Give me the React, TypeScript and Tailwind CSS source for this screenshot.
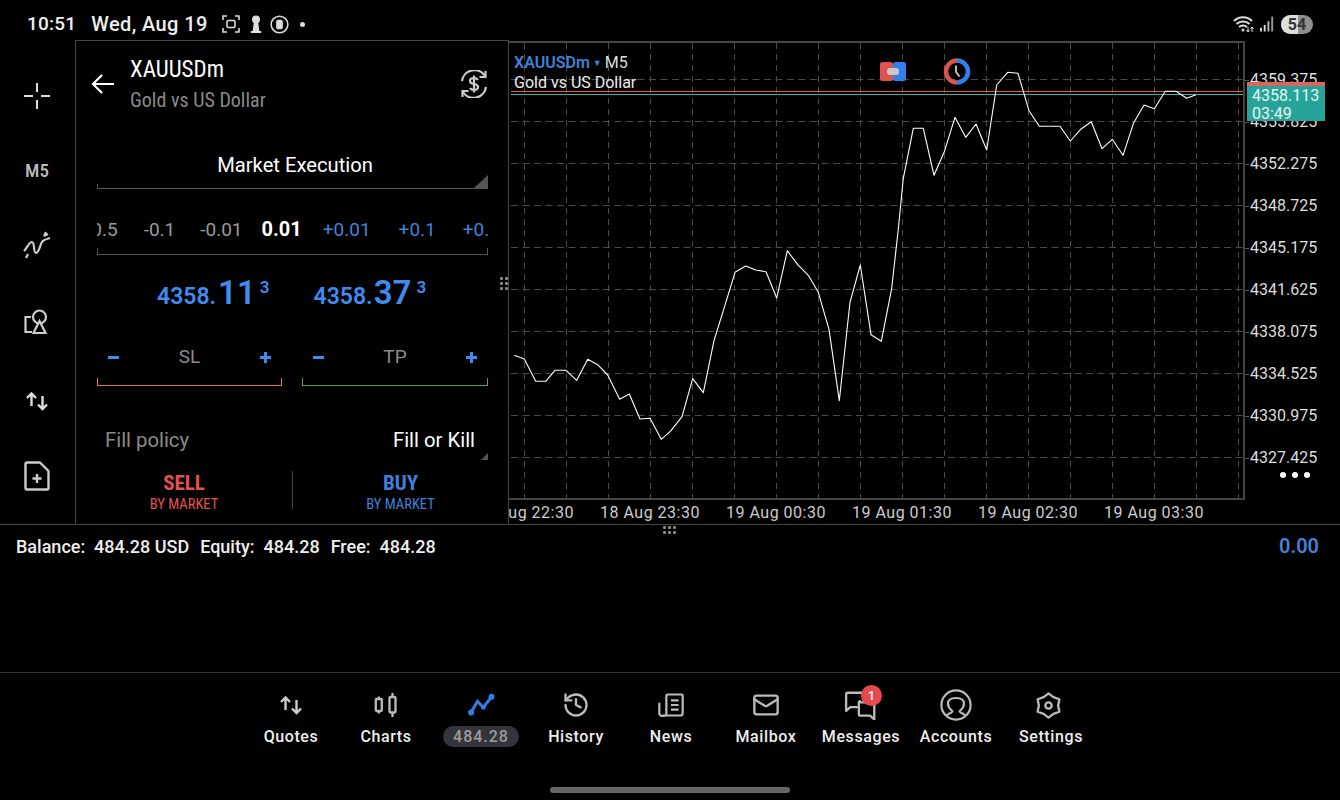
import { History, Mail } from 'lucide-react'
import type { ReactNode } from 'react'

const priceLabels = ['4359.375', '4355.825', '4352.275', '4348.725', '4345.175', '4341.625', '4338.075', '4334.525', '4330.975', '4327.425']
const timeLabels = ['18 Aug 22:30', '18 Aug 23:30', '19 Aug 00:30', '19 Aug 01:30', '19 Aug 02:30', '19 Aug 03:30']
const gridY = [79, 121, 163, 205, 247, 289, 331, 373, 415, 457]
const gridX = [524, 566, 608, 650, 692, 734, 776, 818, 860, 902, 944, 986, 1028, 1070, 1112, 1154, 1196, 1238]

const linePoints =
  '514.3,355.3 524.3,359 535.7,381.3 545.7,381.3 555,370.3 566,370.3 576.7,380.3 587.7,359.3 597.7,364.7 607.7,375 619.7,399.3 629.3,394 640,419 650,418.3 661.3,439.3 671,430.7 682,416.7 692.7,378.7 703.3,392.7 714,340.7 724,308.3 735,272.3 745.7,266 755.7,270 766,271.7 776.7,298 787.3,250.7 797.7,264.7 808.3,275.3 818.3,292.3 829,329.3 839.3,400.7 850,302.3 860.3,265 871,334.7 881.3,341.3 891.7,288.3 898.3,229 903.3,178.3 913.3,128.3 923.3,128.3 934,175.3 944.3,151.7 955,117.3 965.7,137.3 976,124 986.7,150 996.7,85 1007.7,72.3 1018,73.3 1029,110.7 1039.3,126.3 1060,126.3 1070.3,141 1080.7,129.3 1091.3,121.7 1102,148.7 1112.3,139.3 1123,155.3 1133.7,122.7 1144,105 1154.3,108.7 1165.3,91.3 1176,91.3 1186.7,98.3 1196,94.7'

function ArrowsIcon({ className }: { className?: string }) {
  return (
    <svg viewBox="0 0 24 24" className={className} fill="none" stroke="currentColor" strokeWidth="2.4">
      <path d="M6.5 17V4.5M2 9l4.5-4.5L11 9" />
      <path d="M17.5 7v13M13 15.5l4.5 4.5 4.5-4.5" />
    </svg>
  )
}

function CandlesIcon() {
  return (
    <svg viewBox="0 0 24 24" className="w-6 h-6 text-[#bbb]" fill="none" stroke="currentColor" strokeWidth="2.300">
      <rect x="1.800" y="6" width="6" height="12" rx="1" />
      <path d="M4.800 3.500V6M4.800 18v2.500" />
      <rect x="15.500" y="4" width="6" height="15.500" rx="1" />
      <path d="M18.500 0V4M18.500 19.500V24" />
    </svg>
  )
}

function TradeIcon() {
  return (
    <svg viewBox="0 0 24 24" className="w-7 h-7 text-[#2f7fe8]" fill="currentColor" stroke="currentColor" strokeWidth="2.600">
      <polyline points="3,19 9,9 14,14 21,5" fill="none" />
      <circle cx="3.500" cy="18.500" r="2" strokeWidth="1.200" />
      <circle cx="14" cy="14" r="1.500" strokeWidth="1.200" />
      <circle cx="21" cy="5" r="2" strokeWidth="1.200" />
    </svg>
  )
}

function NewsIcon() {
  return (
    <svg viewBox="0 0 24 24" className="w-7 h-7 text-[#bbb]" fill="none" stroke="currentColor" strokeWidth="1.900">
      <path d="M5 21h15a2 2 0 0 0 2-2V4a1 1 0 0 0-1-1H9a1 1 0 0 0-1 1v15a2 2 0 0 1-3 2 2 2 0 0 1-3-2V10" strokeLinejoin="round" />
      <path d="M12 8h6.500M12 12h6.500M12 16h6.500" />
    </svg>
  )
}

function MessagesIcon() {
  return (
    <svg viewBox="0 0 32 28" className="w-[34px] h-[30px] text-[#bbb]" fill="none" stroke="currentColor" strokeWidth="2.200" strokeLinejoin="round">
      <path d="M17 2.500H3.500a1.500 1.500 0 0 0-1.500 1.500v15.500l4-3.500h7" />
      <path d="M15 11.500h12.500a1 1 0 0 1 1 1v15l-4-3.500H15a1 1 0 0 1-1-1v-11.500a1 1 0 0 1 1-1z" />
    </svg>
  )
}

function AccountIcon() {
  return (
    <svg viewBox="0 0 32 32" className="w-8 h-8 text-[#bbb]" fill="none" stroke="currentColor" strokeWidth="2.200">
      <circle cx="16" cy="16" r="14.600" />
      <path d="M6.500 27c1-3 5.500-3 6-4.500 .3-1-4.500-2.500-4.500-8 0-3.300 3-5.500 8-5.500s8 2.200 8 5.500c0 5.500-4.800 7-4.500 8 .5 1.500 5 1.500 6 4.500" />
    </svg>
  )
}

function CogIcon() {
  return (
    <svg viewBox="0 0 28 28" className="w-[27px] h-[27px] text-[#bbb] mr-[6px]" fill="none" stroke="currentColor" strokeWidth="2.400" strokeLinejoin="round">
      <path d="M14 1.500 19 5.300 25.300 7.500 24 14 25.300 20.500 19 22.700 14 26.500 9 22.700 2.700 20.500 4 14 2.700 7.500 9 5.300z" />
      <circle cx="14" cy="14" r="3.300" />
    </svg>
  )
}

function NavItem({ icon, label, pill }: { icon: ReactNode; label: string; pill?: boolean }) {
  return (
    <div className="w-[95px] flex flex-col items-center">
      <div className="h-[34px] flex items-center justify-center">{icon}</div>
      {pill ? (
        <div className="mt-[4px] h-[21px] w-[76px] rounded-full bg-[#33353b] text-[#9c9c9c] text-[16px] leading-[21px] font-medium tracking-[1px] text-center">{label}</div>
      ) : (
        <div className="mt-[4px] h-[21px] text-[#eee] text-[16px] leading-[21px] font-medium tracking-[0.6px] whitespace-nowrap">{label}</div>
      )}
    </div>
  )
}

function Grip({ className }: { className: string }) {
  return (
    <div className={`grid gap-[2px] ${className}`}>
      {[0, 1, 2, 3, 4, 5].map((i) => (
        <div key={i} className="w-[3px] h-[3px] rounded-[1px] bg-[#888]" />
      ))}
    </div>
  )
}

function StopField({ label, color, tick, width }: { label: string; color: string; tick: string; width: string }) {
  return (
    <div className={`${width} h-[46px] border-b ${color} relative flex items-center justify-between px-[11px] pb-[10px]`}>
      <span className="w-[11px] h-[3px] bg-[#3f8cf0]" />
      <span className="text-[#8a8a8a] text-[19px]">{label}</span>
      <span className="relative w-[11px] h-[11px]">
        <span className="absolute left-0 top-[4px] w-[11px] h-[3px] bg-[#3f8cf0]" />
        <span className="absolute left-[4px] top-0 w-[3px] h-[11px] bg-[#3f8cf0]" />
      </span>
      <div className={`absolute left-0 bottom-0 w-px h-[7px] ${tick}`} />
      <div className={`absolute right-0 bottom-0 w-px h-[7px] ${tick}`} />
    </div>
  )
}

function OrderPanel() {
  return (
    <div className="w-[434px] h-full border-l border-r border-t border-[#444] flex flex-col relative font-[Roboto,sans-serif]">
      <div className="h-[86px] flex items-center pl-[15px] pr-[20px]">
        <svg viewBox="0 0 24 24" className="w-6 h-6 text-white" fill="none" stroke="currentColor" strokeWidth="2.200">
          <path d="M23 12H2M11 3l-9 9 9 9" />
        </svg>
        <div className="ml-[15px] flex-1 [font-stretch:75%] pt-[2px]">
          <div className="text-[23px] leading-[30px] text-white">XAUUSDm</div>
          <div className="text-[20px] leading-[30px] text-[#8a8a8a]">Gold vs US Dollar</div>
        </div>
        <svg viewBox="0 0 28 28" className="w-7 h-7 text-[#ccc]" fill="none" stroke="currentColor" strokeWidth="2.200">
          <path d="M25 6A12.500 12.500 0 0 0 2 11M3 22A12.500 12.500 0 0 0 26 17" />
          <path d="M25.500 1v6h-6M2.500 27v-6h6" />
          <path d="M18 10c-1-1.500-2.500-2-4-2-2.500 0-4 1.200-4 3s1.500 2.600 4 3 4 1.200 4 3-1.500 3-4 3c-1.700 0-3.200-.6-4-2M14 5.500v17" />
        </svg>
      </div>

      <div className="ml-[21px] mr-[20px] mt-[21px] h-[41px] border-b border-[#555] text-center text-white text-[20.2px] leading-[35px] relative pl-[5px]">
        Market Execution
        <div className="absolute right-0 bottom-0 w-[14px] h-[13px] bg-[#555] [clip-path:polygon(100%_0,100%_100%,0_100%)]" />
        <div className="absolute left-0 bottom-0 w-px h-[4px] bg-[#555]" />
      </div>

      <div className="ml-[21px] mr-[20px] mt-[22px] h-[44px] relative border-b border-[#555]">
        <div className="flex overflow-hidden text-[19px] leading-[37px] whitespace-nowrap h-[37px]">
          <span className="ml-[-11px] text-[#999]">-0.5</span>
          <span className="ml-[26px] text-[#999]">-0.1</span>
          <span className="ml-[25px] text-[#999]">-0.01</span>
          <span className="ml-[19px] text-white font-bold text-[20px]">0.01</span>
          <span className="ml-[21px] text-[#3f82d9]">+0.01</span>
          <span className="ml-[28px] text-[#3f82d9]">+0.1</span>
          <span className="ml-[27px] text-[#3f82d9]">+0.5</span>
        </div>
        <div className="absolute left-0 bottom-0 w-px h-[6px] bg-[#555]" />
        <div className="absolute right-0 bottom-0 w-px h-[6px] bg-[#555]" />
      </div>

      <div className="mt-[15px] h-[46px] flex items-baseline text-[#3f8cf0] font-semibold whitespace-nowrap leading-[46px]">
        <span className="ml-[81px] text-[23px]">4358.</span>
        <span className="ml-[2px] text-[33px]">11</span>
        <span className="ml-[4px] text-[17px] relative -top-[11px]">3</span>
        <span className="ml-[44px] text-[23px]">4358.</span>
        <span className="ml-[1px] text-[33px]">37</span>
        <span className="ml-[5px] text-[17px] relative -top-[11px]">3</span>
      </div>

      <div className="ml-[21px] mr-[20px] mt-[24px] flex justify-between">
        <StopField label="SL" color="border-[#e2725b]" tick="bg-[#e2725b]" width="w-[185px]" />
        <StopField label="TP" color="border-[#5aa25a]" tick="bg-[#5aa25a]" width="w-[186px]" />
      </div>

      <div className="ml-[21px] mr-[20px] mt-[34px] h-[40px] flex items-center justify-between pl-[8px] pr-[13px] text-[20.300px] relative">
        <span className="text-[#8a8a8a]">Fill policy</span>
        <span className="text-white">Fill or Kill</span>
        <div className="absolute right-0 bottom-0 w-[7px] h-[7px] bg-[#555] [clip-path:polygon(100%_0,100%_100%,0_100%)]" />
      </div>

      <div className="mt-[11px] flex h-[40px] [font-stretch:75%]">
        <div className="w-[216px] text-center text-[#e2504f]">
          <div className="text-[21px] leading-[24px] font-bold">SELL</div>
          <div className="text-[14.500px] leading-[18px] mt-px">BY MARKET</div>
        </div>
        <div className="w-px h-[38px] bg-[#444]" />
        <div className="flex-1 text-center text-[#3f7fdc]">
          <div className="text-[21px] leading-[24px] font-bold">BUY</div>
          <div className="text-[14.500px] leading-[18px] mt-px">BY MARKET</div>
        </div>
      </div>

      <Grip className="absolute left-[424px] top-[236px] grid-cols-2" />
    </div>
  )
}

function Chart() {
  return (
    <div className="flex-1 h-full relative font-[Roboto,sans-serif] min-w-0">
      <div className="flex pt-px">
        <div className="relative w-[736px] h-[459px] border-y-2 border-r-2 border-[#444] shrink-0">
          <svg viewBox="509 43 734 455" className="absolute left-0 top-0 w-[734px] h-[455px]" fill="none">
            {gridY.map((y) => (
              <line key={y} x1="511" x2="1243" y1={y + 0.5} y2={y + 0.5} stroke="#4a4a4a" strokeDasharray="7 4.500" />
            ))}
            {gridX.map((x) => (
              <line key={x} x1={x + 0.5} x2={x + 0.5} y1="43" y2="498" stroke="#4a4a4a" strokeDasharray="6 5" />
            ))}
            <line x1="511" x2="1243" y1="91.500" y2="91.500" stroke="#e0564f" />
            <line x1="511" x2="1243" y1="94.500" y2="94.500" stroke="#45b5a8" />
            <polyline points={linePoints} stroke="#fff" strokeWidth="1.100" strokeLinejoin="round" />
            {/* one-click trading icon */}
            <rect x="880" y="62" width="13" height="19" rx="2.500" fill="#e0524d" />
            <rect x="893" y="62" width="13" height="19" rx="2.500" fill="#2f80ed" />
            <rect x="887" y="68" width="12" height="7" rx="3" fill="#c9c9c9" />
            {/* market clock icon */}
            <path d="M957 60.500a11 11 0 0 0 0 22" stroke="#d9534f" strokeWidth="4.500" />
            <path d="M957 60.500a11 11 0 0 1 0 22" stroke="#2f80ed" strokeWidth="4.500" />
            <path d="M956 65.500v6.500l3.500 4.500" stroke="#cfcfcf" strokeWidth="1.800" />
          </svg>
          <div className="absolute left-[5px] top-[10px]">
            <div className="flex items-center h-[20px] text-[16px] leading-[20px]">
              <span className="font-semibold text-[#3f82d9]">XAUUSDm</span>
              <span className="ml-[3px] text-[9px] text-[#3f82d9]">▼</span>
              <span className="ml-[3px] text-[#ddd]">M5</span>
            </div>
            <div className="text-[16px] leading-[20px] text-[#eee]">Gold vs US Dollar</div>
          </div>
        </div>
        <div className="pt-[18px] flex-1 min-w-0">
          {priceLabels.map((p) => (
            <div key={p} className="h-[42px] flex items-center text-[16px] text-[#ddd]">
              <div className="w-[4px] h-px bg-[#555] mr-px" />
              {p}
            </div>
          ))}
        </div>
      </div>

      <div className="flex overflow-hidden w-[735px] h-[26px] items-center text-[16px] text-[#ccc] tracking-[0.5px] whitespace-nowrap">
        {timeLabels.map((t, i) => (
          <div key={t} className={i === 0 ? 'w-[126px] ml-[-48px] text-center shrink-0' : 'w-[126px] text-center shrink-0'}>
            {t}
          </div>
        ))}
      </div>

      <div className="absolute left-[738px] top-[42px] w-[78px] h-[39px] bg-[#27a499] border-t-[4px] border-[#d9655f] text-[#e8f5f3] text-[16px] leading-[18px] pl-[5px] pt-[1px]">
        <div>4358.113</div>
        <div>03:49</div>
      </div>

      <div className="absolute left-[771px] top-[432px] flex gap-[6px]">
        <div className="w-[6px] h-[6px] rounded-full bg-white" />
        <div className="w-[6px] h-[6px] rounded-full bg-white" />
        <div className="w-[6px] h-[6px] rounded-full bg-white" />
      </div>
    </div>
  )
}

export default function App() {
  return (
    <div className="w-[1340px] h-[800px] bg-black overflow-hidden relative font-[Roboto,sans-serif]">
      {/* status bar */}
      <div className="h-[40px] flex items-center pl-[27px] pr-[27px] text-[#eee] pt-[8px]">
        <span className="text-[19px] font-medium tracking-[0.2px]">10:51</span>
        <span className="ml-[15px] text-[20px] font-medium tracking-[0.4px]">Wed, Aug 19</span>
        <svg viewBox="0 0 18 18" className="ml-[14px] w-[18px] h-[18px]" fill="none" stroke="#ddd" strokeWidth="1.600">
          <path d="M1 5V1h4M13 1h4v4M1 13v4h4M13 17h4v-4" />
          <rect x="5" y="5.500" width="8" height="7" rx="1.500" />
        </svg>
        <svg viewBox="0 0 12 18" className="ml-[10px] w-[12px] h-[18px]" fill="#ddd">
          <circle cx="6" cy="4.500" r="4" />
          <path d="M4 6h4l1.500 11h-7z" />
          <rect x="0.500" y="16" width="11" height="2" rx="1" />
        </svg>
        <svg viewBox="0 0 20 20" className="ml-[8px] w-[19px] h-[19px]" fill="none" stroke="#ddd" strokeWidth="1.600">
          <circle cx="10" cy="10" r="8.800" />
          <rect x="6.500" y="5" width="7" height="10" rx="2" fill="#ddd" stroke="none" />
        </svg>
        <div className="ml-[11px] w-[5px] h-[5px] rounded-full bg-[#ddd]" />
        <div className="ml-auto flex items-center">
          <svg viewBox="0 0 22 18" className="w-[22px] h-[18px]" fill="none" stroke="#ddd" strokeWidth="2">
            <path d="M1 6c5-5 13-5 18 0M3.500 9c3.500-3.500 9.500-3.500 13 0M6 12c2.200-2 5.800-2 8 0" />
            <circle cx="10" cy="15" r="1.500" fill="#ddd" stroke="none" />
            <path d="M15 12v5M13.500 15l1.500 2 1.500-2M19 17v-5M17.500 14l1.500-2 1.500 2" strokeWidth="1" />
          </svg>
          <svg viewBox="0 0 16 16" className="ml-[5px] w-[15px] h-[16px]" fill="#ddd">
            <rect x="0" y="12" width="2" height="4" />
            <rect x="4" y="9" width="2" height="7" />
            <rect x="8" y="5" width="2" height="11" fill="#bbb" />
            <rect x="12" y="0" width="2" height="16" fill="#999" />
          </svg>
          <div className="ml-[6px] w-[32px] h-[19px] rounded-full overflow-hidden relative bg-[#8f8f8f] text-[#333] text-[16px] leading-[19px] font-bold text-center">
            <div className="absolute left-0 top-0 bottom-0 w-[17px] bg-[#ddd]" />
            <span className="relative">54</span>
          </div>
        </div>
      </div>

      {/* main row */}
      <div className="h-[485px] flex border-b border-[#444]">
        <div className="w-[75px] h-full text-[#ccc] pr-px">
          <div className="flex flex-col items-center pt-[42px]">
            <svg viewBox="0 0 28 28" className="w-[28px] h-[28px]" fill="none" stroke="#ddd" strokeWidth="2">
              <path d="M1 14h9M18 14h9M14 1v9M14 18v9" />
            </svg>
            <div className="mt-[49px] h-[24px] text-[19px] leading-[24px] font-medium [font-stretch:75%] text-[#bbb]">M5</div>
            <svg viewBox="0 0 28 28" className="mt-[48px] w-[28px] h-[28px]" fill="none" stroke="#ccc" strokeWidth="2.200">
              <path d="M1 20c3-3 5-9 8-9 3 0 1 11 4 11 3 0 4-8 6-11 1.500-2 4-3 8-4M3 27l2-4M21 5l2-4M25 3l-4 2" />
            </svg>
            <svg viewBox="0 0 26 26" className="mt-[50px] w-[26px] h-[26px]" fill="none" stroke="#ccc" strokeWidth="2.200">
              <circle cx="15.500" cy="8" r="6.500" />
              <path d="M15.500 12L9.500 24h12z" fill="#000" />
              <path d="M7 8H1.500v15H8" />
            </svg>
            <ArrowsIcon className="mt-[54px] w-6 h-6 text-[#ddd]" />
            <svg viewBox="0 0 26 30" className="mt-[48px] w-[26px] h-[30px]" fill="none" stroke="#ccc" strokeWidth="2.400" strokeLinejoin="round">
              <path d="M3 1.500h13l8.500 8.500v17a1.500 1.500 0 0 1-1.500 1.500H3A1.500 1.500 0 0 1 1.500 27V3A1.500 1.500 0 0 1 3 1.500z" />
              <path d="M13 13v9M8.500 17.500h9" />
            </svg>
          </div>
        </div>
        <OrderPanel />
        <Chart />
      </div>

      <Grip className="absolute left-[663px] top-[526px] grid-cols-3" />

      {/* balance row */}
      <div className="h-[148px] border-b border-[#333] flex items-start justify-between pl-[16px] pr-[21px] pt-[9px]">
        <div className="text-[18px] leading-[26px] font-medium text-[#eee] [font-stretch:95%] flex gap-[11px]">
          <span>Balance:&nbsp; 484.28 USD</span>
          <span>Equity:&nbsp; 484.28</span>
          <span>Free:&nbsp; 484.28</span>
        </div>
        <div className="text-[20px] leading-[24px] font-semibold text-[#3f82d9]">0.00</div>
      </div>

      {/* bottom nav */}
      <div className="flex justify-center pl-[2px] pt-[15px]">
        <NavItem icon={<ArrowsIcon className="w-6 h-6 text-[#ccc]" />} label="Quotes" />
        <NavItem icon={<CandlesIcon />} label="Charts" />
        <NavItem icon={<TradeIcon />} label="484.28" pill />
        <NavItem icon={<History className="w-[28px] h-[28px] text-[#bbb]" strokeWidth={2} />} label="History" />
        <NavItem icon={<NewsIcon />} label="News" />
        <NavItem icon={<Mail className="w-[28px] h-[28px] text-[#bbb]" strokeWidth={2} />} label="Mailbox" />
        <NavItem
          icon={
            <div className="relative">
              <MessagesIcon />
              <div className="absolute left-[17px] top-[-5px] w-[21px] h-[21px] rounded-full bg-[#e5484d] text-white text-[13px] leading-[21px] font-medium text-center">1</div>
            </div>
          }
          label="Messages"
        />
        <NavItem icon={<AccountIcon />} label="Accounts" />
        <NavItem icon={<CogIcon />} label="Settings" />
      </div>

      <div className="absolute left-[550px] top-[787px] w-[240px] h-[6px] rounded-full bg-[#666]" />
    </div>
  )
}
